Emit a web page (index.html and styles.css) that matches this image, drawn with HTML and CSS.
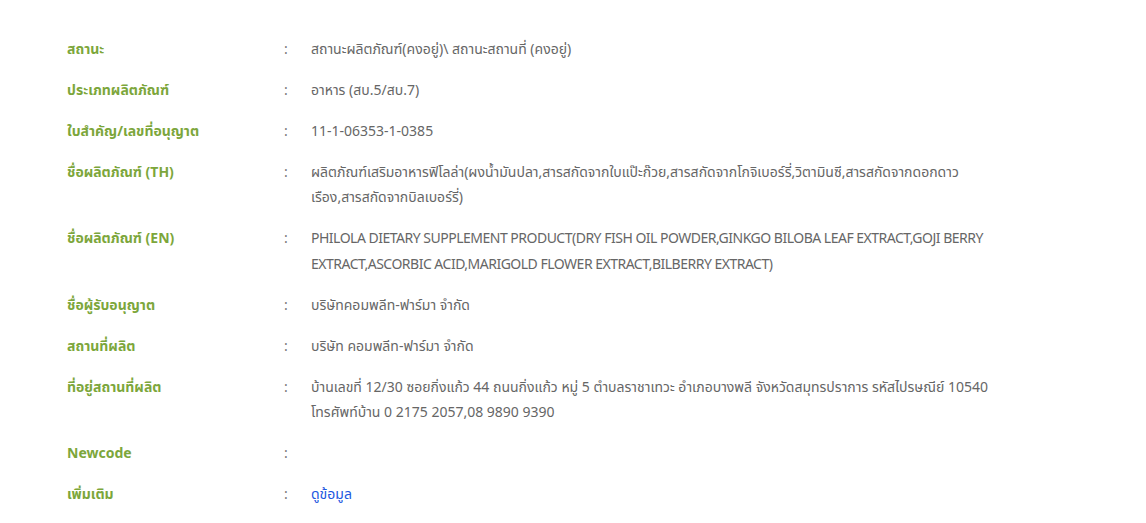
FILE: index.html
```html
<!DOCTYPE html>
<html lang="th">
<head>
  <meta charset="UTF-8" />
  <meta name="viewport" content="width=device-width, initial-scale=1.0" />
  <title>ข้อมูลผลิตภัณฑ์</title>
  <link rel="stylesheet" href="styles.css">
</head>
<body>

<div class="detail">
  <div class="row">
    <div class="label">สถานะ</div>
    <div class="sep">:</div>
    <div class="value">สถานะผลิตภัณฑ์(คงอยู่)\ สถานะสถานที่ (คงอยู่)</div>
  </div>
  <div class="row">
    <div class="label">ประเภทผลิตภัณฑ์</div>
    <div class="sep">:</div>
    <div class="value">อาหาร (สบ.5/สบ.7)</div>
  </div>
  <div class="row">
    <div class="label">ใบสำคัญ/เลขที่อนุญาต</div>
    <div class="sep">:</div>
    <div class="value">11-1-06353-1-0385</div>
  </div>
  <div class="row">
    <div class="label">ชื่อผลิตภัณฑ์ (TH)</div>
    <div class="sep">:</div>
    <div class="value">ผลิตภัณฑ์เสริมอาหารฟิโลล่า(ผงน้ำมันปลา,สารสกัดจากใบแป๊ะก๊วย,สารสกัดจากโกจิเบอร์รี่,วิตามินซี,สารสกัดจากดอกดาวเรือง,สารสกัดจากบิลเบอร์รี่)</div>
  </div>
  <div class="row">
    <div class="label">ชื่อผลิตภัณฑ์ (EN)</div>
    <div class="sep">:</div>
    <div class="value latin">PHILOLA DIETARY SUPPLEMENT PRODUCT(DRY FISH OIL POWDER,GINKGO BILOBA LEAF EXTRACT,GOJI BERRY EXTRACT,ASCORBIC ACID,MARIGOLD FLOWER EXTRACT,BILBERRY EXTRACT)</div>
  </div>
  <div class="row">
    <div class="label">ชื่อผู้รับอนุญาต</div>
    <div class="sep">:</div>
    <div class="value">บริษัทคอมพลีท-ฟาร์มา จำกัด</div>
  </div>
  <div class="row">
    <div class="label">สถานที่ผลิต</div>
    <div class="sep">:</div>
    <div class="value">บริษัท คอมพลีท-ฟาร์มา จำกัด</div>
  </div>
  <div class="row">
    <div class="label">ที่อยู่สถานที่ผลิต</div>
    <div class="sep">:</div>
    <div class="value">บ้านเลขที่ 12/30 ซอยกิ่งแก้ว 44 ถนนกิ่งแก้ว หมู่ 5 ตำบลราชาเทวะ อำเภอบางพลี จังหวัดสมุทรปราการ รหัสไปรษณีย์ 10540 โทรศัพท์บ้าน 0 2175 2057,08 9890 9390</div>
  </div>
  <div class="row">
    <div class="label">Newcode</div>
    <div class="sep">:</div>
    <div class="value"></div>
  </div>
  <div class="row">
    <div class="label">เพิ่มเติม</div>
    <div class="sep">:</div>
    <div class="value"><a href="#" class="more">ดูข้อมูล</a></div>
  </div>
</div>

</body>
</html>
```

FILE: styles.css
```css
body {
  font-family: "Noto Sans", "Noto Sans Thai", "DejaVu Sans", sans-serif;
  background: #fff;
  margin: 0;
  padding: 0;
  font-size: 14px;
  color: #666;
}
.detail {
  padding: 28px 0 0 67px;
}
.row {
  display: grid;
  grid-template-columns: 217px 27px 690px;
  padding: 7.75px 0;
  line-height: 25.5px;
}
.label {
  color: #7ca63b;
  font-weight: bold;
}
.sep {
  color: #777;
}
.value {
  color: #666;
}
.latin {
  letter-spacing: -0.5px;
}
.more {
  color: #2157e0;
  text-decoration: none;
}
```
